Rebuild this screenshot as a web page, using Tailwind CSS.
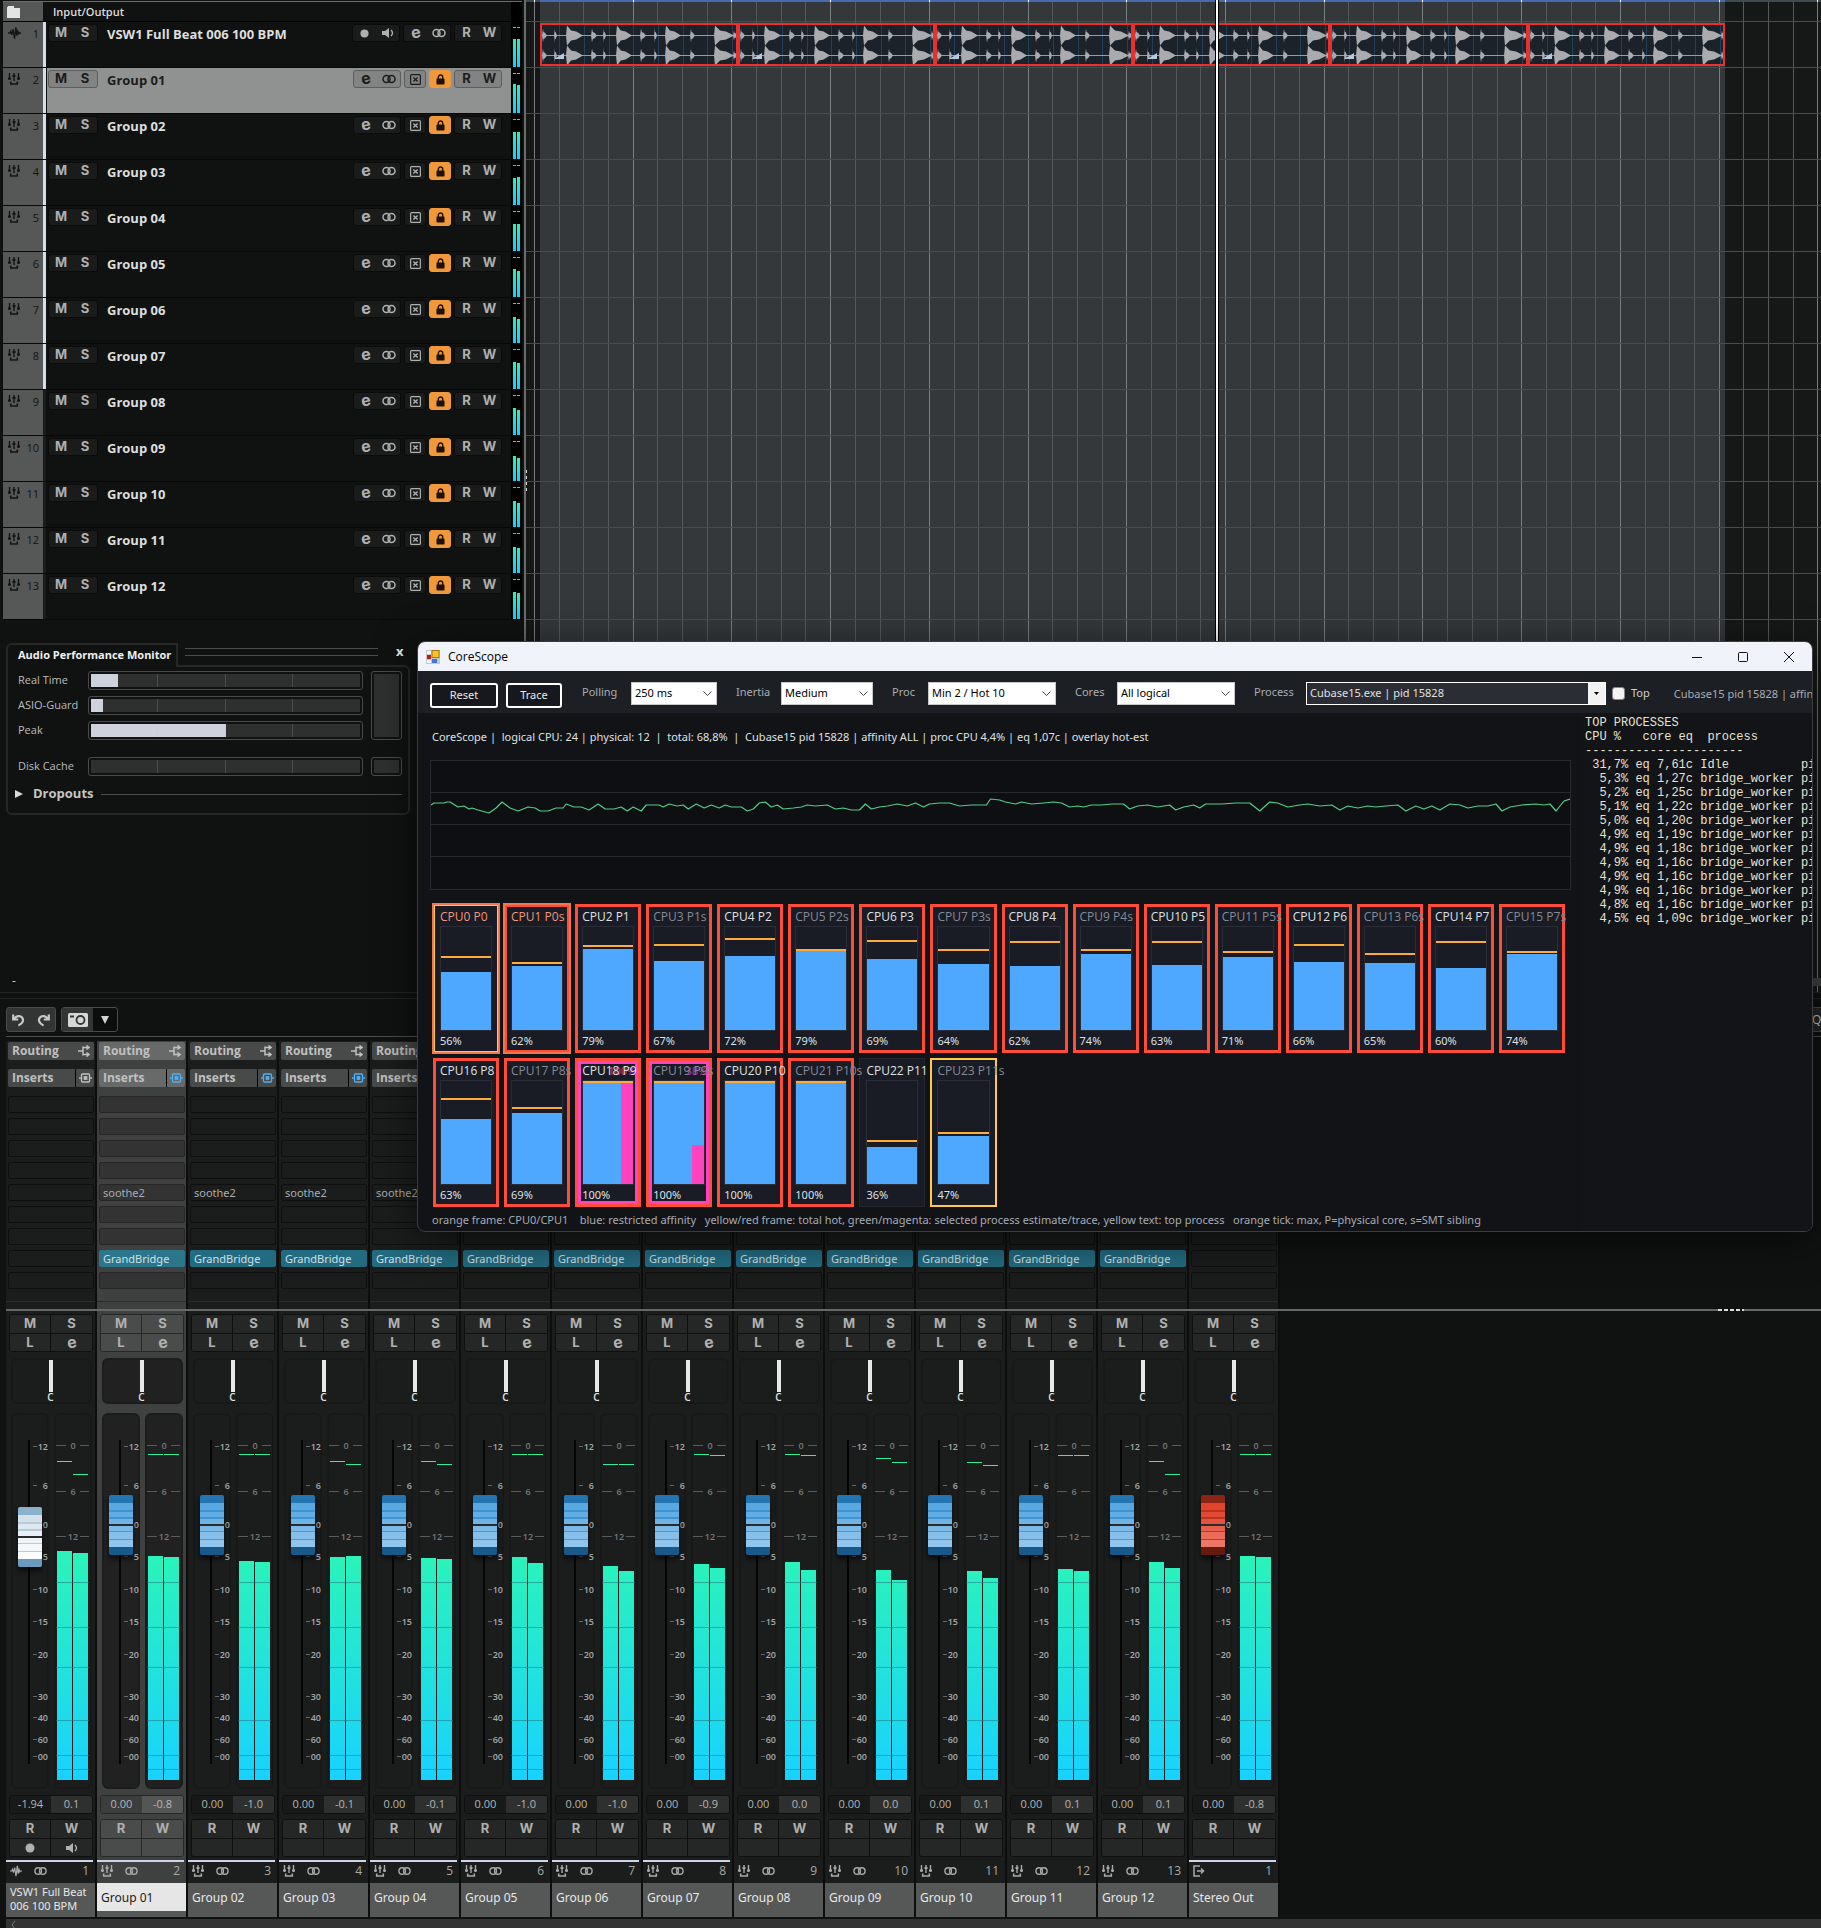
<!DOCTYPE html>
<html lang="en">
<head>
  <meta charset="UTF-8" />
  <meta name="viewport" content="width=device-width, initial-scale=1.0">
  <title>Cubase - CoreScope</title>
  <script src="https://cdn.jsdelivr.net/npm/@tailwindcss/browser@4"></script>
</head>
<body class="bg-[#101211] text-[#c8c8c8] font-['Open_Sans','Noto_Sans',sans-serif] text-xs">

  <!-- Shared icons -->
  <svg class="hidden">
    <symbol id="i-group" viewBox="0 0 12 12"><path d="M1.500 0v7M6 0v8M10.500 0v7" fill="none" stroke="currentColor" stroke-width="1.400" /><path d="M0 4.500h3v2H0zM4.500 2h3v2h-3zM9 4.500h3v2H9z" fill="currentColor" /><path d="M2.700 8.500V11h6.600V8.500" fill="none" stroke="currentColor" stroke-width="1.600" /></symbol>
    <symbol id="i-wave" viewBox="0 0 14 12"><path d="M0 6h2l1-2 1 4 1.500-6 1.500 10L8.500 0l1 9 1-5 1 3 .7-1H14" fill="none" stroke="currentColor" stroke-width="1.400" /></symbol>
    <symbol id="i-link" viewBox="0 0 14 10"><g fill="none" stroke="currentColor" stroke-width="1.500"><circle cx="4.500" cy="5" r="3.500" /><circle cx="9.500" cy="5" r="3.500" /></g></symbol>
    <symbol id="i-speaker" viewBox="0 0 12 10"><path d="M0 3h3l4-3v10L3 7H0z" fill="currentColor" /><path d="M9 2c2 2 2 4 0 6" fill="none" stroke="currentColor" stroke-width="1.300" /></symbol>
    <symbol id="i-rec" viewBox="0 0 10 10"><circle cx="5" cy="5" r="4.500" fill="currentColor" /></symbol>
    <symbol id="i-freeze" viewBox="0 0 12 12"><rect x=".7" y=".7" width="10.600" height="10.600" rx="1" fill="none" stroke="currentColor" stroke-width="1.300" /><path d="M3.700 3.700l4.600 4.600M8.300 3.700L3.700 8.300" stroke="currentColor" stroke-width="1.500" /></symbol>
    <symbol id="i-lock" viewBox="0 0 10 12"><rect x="0.500" y="5" width="9" height="6.500" rx="1" fill="currentColor" /><path d="M2.500 5.500V3.500a2.500 2.500 0 0 1 5 0v2" fill="none" stroke="currentColor" stroke-width="1.500" /></symbol>
    <symbol id="i-route" viewBox="0 0 12 12"><path d="M0 6h5M5 1.500v9M5 2.500h5M5 9.500h5M8.500 0.500l2.500 2-2.500 2M8.500 7.500l2.500 2-2.500 2" fill="none" stroke="currentColor" stroke-width="1.500" /></symbol>
    <symbol id="i-insert" viewBox="0 0 14 10"><rect x="2.700" y=".7" width="8.600" height="8.600" rx="1" fill="none" stroke="currentColor" stroke-width="1.400" /><path d="M0 5h2M12 5h2" stroke="currentColor" stroke-width="1.500" /><rect x="5" y="3" width="4" height="4" fill="currentColor" /></symbol>
    <symbol id="i-out" viewBox="0 0 12 12"><path d="M7 1H1v10h6M4 6h6M8 3.500L10.500 6 8 8.500" fill="none" stroke="currentColor" stroke-width="1.500" /></symbol>
  </svg>

  <main class="relative overflow-hidden">

    <!-- Project window -->
    <section class="flex h-[992px]">
      <div class="w-[524px] shrink-0 flex flex-col">
        <div class="ml-[3px] mr-[2px] mt-px border-t border-[#6b6c6b]">
          <div class="flex h-5 border-b border-black">
            <div class="w-10 bg-[#555857] flex items-center pl-1">
              <svg width="13" height="12" viewBox="0 0 13 12" fill="#e4e4e4"><path d="M0 1h1V0h6v2h6v10H0z" /></svg>
            </div>
            <h2 class="flex-1 pl-[10px] font-semibold text-[11px] leading-5 text-[#dcdcdc]">Input/Output</h2>
            <div class="w-[11px] bg-black"></div>
          </div>
          <div id="tracks"></div>
        </div>

        <!-- Audio Performance Monitor -->
        <div class="mt-[23px] ml-[6px] w-[404px]">
          <div class="flex h-[22px]">
            <h2 class="w-[172px] h-6 bg-[#101211] relative border-2 border-b-0 border-[#262827] rounded-tl-md pl-[10px] font-bold text-[11px] leading-[20px] text-[#f0f0f0] whitespace-nowrap">Audio Performance Monitor</h2>
            <div class="flex-1 mt-[5px] ml-[7px] mr-[18px] h-2 border-y border-[#4d4d4d]"></div>
            <button class="w-[14px] h-4 text-left font-bold text-[13px] leading-4 text-[#e8e8e8]" aria-label="Close">x</button>
          </div>
          <div class="h-[150px] border-2 border-[#262827] rounded-md rounded-tl-none pl-[10px] pr-[6px] pt-1">
            <div class="flex gap-2">
              <div id="perf" class="flex-1 flex flex-col gap-[6px]"></div>
              <div class="w-[31px] h-[69px] border border-[#4a4a4a] rounded-[3px] p-[2px]"><div class="h-full bg-[#2e302f]"></div></div>
            </div>
            <div class="flex gap-2 mt-[17px]">
              <div id="disk" class="flex-1"></div>
              <div class="w-[31px] h-[19px] border border-[#4a4a4a] rounded-[3px] p-[2px]"><div class="h-full bg-[#2e302f]"></div></div>
            </div>
            <button class="flex items-center w-full mt-2 h-5 font-bold text-[13px] text-[#c4c4c4]">
              <svg class="-ml-[3px] mr-[10px]" width="8" height="8" fill="#d8d8d8"><path d="M0 0l8 4-8 4z" /></svg>
              Dropouts <span class="flex-1 ml-[7px] h-px bg-[#4d4d4d]"></span>
            </button>
          </div>
        </div>
        <p class="mt-auto pl-3 leading-[22px]">-</p>
      </div>

      <!-- Arrange area -->
      <div id="arrange" class="flex-1 relative overflow-hidden border-l-2 border-[#6a6b6b] bg-[#161817]"></div>
    </section>

    <!-- MixConsole -->
    <section class="border-t border-[#222423]">
      <div class="mt-[5px] border-t border-[#222423]"></div>
      <div class="ml-[6px] mt-2 flex gap-[5px] h-[25px]">
        <div class="flex w-[50px] bg-[#333534] border border-[#4a4c4b] rounded-[3px] items-center justify-around text-[#c8c8c8]">
          <button aria-label="Undo"><svg width="14" height="14" viewBox="0 0 14 14" fill="none" stroke="currentColor" stroke-width="2.200"><path d="M1.200 1.500v5h5M2 6c2-3 6-4 8-1.500s1 6-3.500 8" /></svg></button>
          <button aria-label="Redo"><svg width="14" height="14" viewBox="0 0 14 14" fill="none" stroke="currentColor" stroke-width="2.200"><path d="M12.800 1.500v5h-5M12 6C10 3 6 2 4 4.500s-1 6 3.500 8" /></svg></button>
        </div>
        <div class="flex w-[57px] border border-[#4a4c4b] rounded-[3px] items-center bg-[#0c0d0d]">
          <button class="w-[31px] h-full bg-[#333534] grid place-items-center" aria-label="Snapshot"><svg width="20" height="14" viewBox="0 0 20 14"><rect width="20" height="14" rx="1.500" fill="#d6d6d6" /><rect x="2" y="2.500" width="4" height="2" fill="#333" /><circle cx="12.500" cy="7" r="4" fill="none" stroke="#333" stroke-width="1.800" /></svg></button>
          <button class="flex-1 grid place-items-center" aria-label="Snapshots menu"><svg width="8" height="8" fill="#d0d0d0"><path d="M0 0h8L4 8z" /></svg></button>
        </div>
      </div>
      <div class="ml-[6px] mt-1 h-px bg-[#4c4e4d]"></div>
      <div id="racks" class="ml-[6px] mt-1 flex h-[268px]"></div>
      <div class="ml-[6px] h-[2px] bg-[#666867] flex justify-end pr-[77px]"><div class="w-[26px] bg-[repeating-linear-gradient(90deg,#ddd_0_4px,#101211_4px_6px)]"></div></div>
      <div id="strips" class="ml-[6px] flex"></div>
      <div class="ml-[6px] mt-[2px] h-[9px] bg-[#333333] pl-1"><svg width="6" height="9" fill="none" stroke="#777"><path d="M5 2L2 6l3 4" /></svg></div>
    </section>

    <!-- Right edge scroller and zoom button, mostly behind the window -->
    <div class="absolute right-0 top-[978px] w-3 h-2 bg-[#424443]"></div>
    <div class="absolute right-0 top-[1007px] w-[9px] h-[25px] border-y border-[#4a4c4b] bg-[#262827] leading-[23px] overflow-hidden">Q-</div>

    <!-- CoreScope window -->
    <section class="absolute left-[417px] right-2 top-[641px] h-[591px] rounded-lg border border-[#3a3c40] bg-[#121317] overflow-hidden shadow-[0_8px_40px_rgba(0,0,0,0.6)] flex flex-col font-['Noto_Sans',sans-serif] text-[11px]">
      <header class="h-[29px] shrink-0 bg-[#f0f3f9] text-black flex items-center pl-2">
        <svg width="14" height="14" viewBox="0 0 14 14"><path d="M0 0h14v14H0z" fill="#c4c8ce" /><path d="M1 1h4v3H1zM1 10h4v3H1z" fill="#f6f6f6" /><rect x="6" y="0.500" width="7" height="7" fill="#f9c22e" stroke="#a97800" /><rect x="1" y="5" width="4" height="4" fill="#b02318" /><rect x="6" y="9" width="5" height="4" fill="#3c78d8" /></svg>
        <h1 class="flex-1 pl-2 font-['Open_Sans',sans-serif] text-xs">CoreScope</h1>
        <div class="flex gap-[34px] pr-[17px]">
          <button aria-label="Minimize"><svg width="12" height="12" stroke="#111"><path d="M1 6.500h10" /></svg></button>
          <button aria-label="Maximize"><svg width="12" height="12" fill="none" stroke="#111"><rect x="1.500" y="1.500" width="9" height="9" rx="1" /></svg></button>
          <button aria-label="Close window"><svg width="12" height="12" stroke="#111"><path d="M1 1l10 10M11 1L1 11" /></svg></button>
        </div>
      </header>

      <div class="h-[42px] shrink-0 bg-[#1c1f24] flex items-start pt-[11px] pl-3 text-[#a9adb3] whitespace-nowrap overflow-hidden">
        <button class="mt-px w-[68px] h-[25px] shrink-0 rounded-[3px] border-2 border-white bg-[#16181d] text-[#e8e8e8]">Reset</button>
        <button class="mt-px ml-2 w-14 h-[25px] shrink-0 rounded-[3px] border-2 border-white bg-[#16181d] text-[#e8e8e8]">Trace</button>
        <div id="combos" class="flex shrink-0 ml-px"></div>
        <label for="process" class="w-[52px] ml-[19px] shrink-0 leading-5">Process</label>
        <div class="relative w-[300px] shrink-0">
          <select id="process" class="appearance-none w-full h-[23px] border border-white bg-[#2a2d34] text-[#e0e0e0] pl-[3px]"><option>Cubase15.exe | pid 15828</option></select>
          <span class="absolute right-px top-px w-[17px] h-[21px] bg-[#f2f2f2] grid place-items-center pointer-events-none"><svg width="5" height="3"><path d="M0 0h5L2.500 3z" /></svg></span>
        </div>
        <input id="top" type="checkbox" class="appearance-none ml-[6px] mt-[5px] w-[13px] h-[13px] shrink-0 rounded-[3px] bg-[#f3f3f3] border border-[#888]">
        <label for="top" class="ml-[6px] leading-[22px] text-[#d0d0d0]">Top</label>
        <span class="ml-6 leading-6">Cubase15 pid 15828 | affinity ALL</span>
      </div>

      <div class="flex-1 flex min-h-0">
        <div class="flex-1 min-w-0 pl-3 text-[#dfe1e4]">
          <p class="pl-[2px] mt-[14px] leading-5 whitespace-pre">CoreScope |  logical CPU: 24 | physical: 12  |  total: 68,8%  |  Cubase15 pid 15828 | affinity ALL | proc CPU 4,4% | eq 1,07c | overlay hot-est</p>
          <svg class="mt-[13px] h-[130px] w-[calc(100%-11px)] bg-[#0e0f12] border border-[#26282f]" viewBox="0 0 1138 128" preserveAspectRatio="none" fill="none">
            <path d="M0 31.500h1138M0 63.500h1138M0 95.500h1138" stroke="#26282f" />
            <path id="load" stroke="#4fce86" stroke-width="1.200" stroke-linejoin="round" />
          </svg>
          <div id="cores" class="ml-[3px] mr-[17px] mt-[14px] grid grid-cols-16 gap-[5px]"></div>
          <p class="pl-[2px] mt-[3px] leading-5 whitespace-pre text-[#a6abb4]">orange frame: CPU0/CPU1    blue: restricted affinity   yellow/red frame: total hot, green/magenta: selected process estimate/trace, yellow text: top process   orange tick: max, P=physical core, s=SMT sibling</p>
        </div>
        <pre id="procs" class="w-[230px] shrink-0 pl-[3px] pt-[3px] bg-[#131418] overflow-hidden font-['Liberation_Mono',monospace] text-xs leading-[14px] text-[#e6e3cf]"></pre>
      </div>
    </section>
  </main>

  <script>
    const icon = (id, w, h) => `<svg width="${w}" height="${h}"><use href="#i-${id}" /></svg>`;
    const letterE = `<span class="font-['Inter',sans-serif] font-bold text-base leading-none -rotate-12 -mt-[3px]">e</span>`;

    // ---- Track list ----
    const trackMeters = [[28, 28], [29, 28], [27, 27], [27, 28], [27, 27], [28, 26], [26, 24], [27, 26], [27, 25], [25, 23], [26, 24], [26, 25], [27, 26]];

    function btnGroup(items, sel, cls) {
      const skin = sel ? 'border-[#5c5e5d] bg-[#828483] text-[#1c1c1c]' : 'border-[#0a0b0a] bg-[#1a1c1b] text-[#b0b0b0]';
      return `<div class="flex h-[18px] rounded-[3px] border ${cls || skin}">` +
        items.map(i => `<button class="flex-1 flex items-center justify-center">${i}</button>`).join('') + `</div>`;
    }

    document.getElementById('tracks').innerHTML = trackMeters.map((m, i) => {
      const sel = i === 1;
      const name = i === 0 ? 'VSW1 Full Beat 006 100 BPM' : 'Group ' + String(i).padStart(2, '0');
      const box = (items, w, cls) => `<div class="${w}">${btnGroup(items, sel, cls)}</div>`;
      const buttons = i === 0
        ? box([icon('rec', 9, 9), icon('speaker', 12, 10)], 'w-12') + box([letterE, icon('link', 14, 10)], 'w-12')
        : box([letterE, icon('link', 14, 10)], 'w-12') + box([icon('freeze', 11, 11)], 'w-[22px]') +
          box([icon('lock', 9, 11)], 'w-[22px]', 'border-[#f0983a] bg-[#f0983a] text-[#1c1206]');
      return `<div class="flex h-[46px] border-b border-[#070807]">
        <div class="w-10 bg-[#555857] text-[#141414] flex justify-between items-start pl-[5px] pr-1 pt-[5px]">
          ${icon(i ? 'group' : 'wave', i ? 12 : 13, 12)}<span class="text-[11px] leading-[14px]">${i + 1}</span>
        </div>
        <div class="w-[3px] mr-px ${i < 8 ? 'bg-[#d5dfeb]' : 'bg-[#1a1c1b]'}"></div>
        <div class="flex-1 flex pt-[2px] pl-px pr-[9px] ${sel ? 'bg-[#909291]' : ''}">
          <div class="w-[50px] font-['Inter',sans-serif] font-bold text-[13px]">${btnGroup(['M', 'S'], sel)}</div>
          <div class="flex-1 pl-[9px] font-bold text-[13px] leading-5 ${sel ? 'text-[#1c1c1c]' : 'text-[#dedede]'}">${name}</div>
          <div class="flex gap-[3px]">${buttons}<div class="w-12 font-['Inter',sans-serif] font-bold text-[13px]">${btnGroup(['R', 'W'], sel)}</div></div>
        </div>
        <div class="w-[11px] bg-black flex flex-col justify-between items-center pt-[5px]">
          <div class="flex gap-px"><i class="w-[3px] h-px bg-[#2ee69a]"></i><i class="w-[3px] h-px bg-[#2ee69a]"></i></div>
          <div class="flex gap-px items-end">
            ${m.map(h => `<i class="w-[3px] bg-linear-to-t from-[#18ccff] to-[#2bf0b8]" style="height:${h}px"></i>`).join('')}
          </div>
        </div>
      </div>`;
    }).join('');

    // ---- Performance bars ----
    const perfBar = (label, pct) => `<div class="flex items-center h-[19px]">
      <span class="w-[70px] text-[11px] text-[#bcbcbc]">${label}</span>
      <div class="flex-1 h-[19px] border border-[#4a4a4a] rounded-[3px] p-[2px]">
        <div class="h-full relative bg-[#2e302f]">
          <div class="h-full bg-[#cdd2dc]" style="width:${pct}%"></div>
          <div class="absolute inset-0 grid grid-cols-4 divide-x divide-[#b9c3bf]/20"><i></i><i></i><i></i><i></i></div>
        </div>
      </div></div>`;
    document.getElementById('perf').innerHTML = perfBar('Real Time', 10) + perfBar('ASIO-Guard', 4.5) + perfBar('Peak', 50);
    document.getElementById('disk').innerHTML = perfBar('Disk Cache', 0);

    // ---- Arrange grid and clips (x is relative to the area's left edge) ----
    const hits = [[0, 7, 5], [12, 8, 3], [24, 10, 17], [49, 7, 6], [61, 8, 3], [74, 10, 16], [98, 7, 6], [112, 8, 3], [123, 10, 16], [148, 7, 5], [172, 10, 20], [191, 5, 5]];
    function wave(cy) {
      return hits.map(([x, a, w]) =>
        `M${x} ${cy}L${x + 1} ${cy - a}L${x + w * 0.3} ${cy - a * 0.5}L${x + w * 0.6} ${cy - a * 0.4}L${x + w} ${cy}L${x + w * 0.6} ${cy + a * 0.4}L${x + w * 0.3} ${cy + a * 0.5}L${x + 1} ${cy + a}Z`).join('');
    }
    const clip = `<div class="border-2 border-[#e9302c] bg-[#1b2229] overflow-hidden">
      <svg width="198" height="39">
        ${[17, 42, 67, 91, 116, 141, 165, 190].map(x => `<path d="M${x}.500 0v39" stroke="#22405a" />`).join('')}
        <path d="M0 10.500h198M0 30.500h198" stroke="#9a9ca0" />
        <path d="${wave(10.5)}${wave(30.5)}" fill="#a9abaf" />
        <path d="M12 34l10-6v6z" fill="#b8c8dc" />
      </svg></div>`;
    let grid = '';
    for (let k = 0; k < 53; k++) {
      const x = Math.round(8 + k * 24.68) + 0.5;
      grid += `<path d="M${x} 2v990" stroke="${k % 4 ? '#565a5d' : '#7a7e82'}" />`;
      if (k % 4 === 0) grid += `<path d="M${x} 0v2" stroke="#fff" />`;
    }
    for (let k = 0; k < 14; k++) grid += `<path d="M0 ${21.5 + k * 46}h1300" stroke="#484c4e" />`;
    document.getElementById('arrange').innerHTML = `
      <div class="h-[2px] bg-[#3c4b4e]"><div class="h-full ml-[14px] w-[1185px] bg-[#4a6ab0]"></div></div>
      <div class="h-full ml-[14px] w-[1185px] bg-[#34383b]"></div>
      <svg class="absolute inset-0 w-full h-full">${grid}</svg>
      <div class="absolute left-[14px] top-[23px] w-[1185px] h-[43px] grid grid-cols-6">${clip.repeat(6)}</div>
      <div class="absolute left-[689px] top-0 w-1 h-full border-x border-black bg-white"></div>
      <div class="absolute left-0 top-[470px] w-px h-6 bg-[repeating-linear-gradient(#ddd_0_3px,#161817_3px_6px)]"></div>`;

    // ---- Mixer channels: fader dB, peak dB, bar tops, peak hold marks ----
    const channels = [
      ['-1.94', '0.1', 138, 140, 48, 61], ['0.00', '-0.8', 143, 144, 41, 41], ['0.00', '-1.0', 148, 149, 41, 41],
      ['0.00', '-0.1', 144, 143, 48, 51], ['0.00', '-0.1', 145, 146, 48, 51], ['0.00', '-1.0', 144, 150, 41, 41],
      ['0.00', '-1.0', 153, 158, 51, 51], ['0.00', '-0.9', 151, 155, 41, 42], ['0.00', '0.0', 149, 157, 41, 42],
      ['0.00', '0.0', 157, 167, 45, 49], ['0.00', '0.1', 158, 165, 49, 52], ['0.00', '0.1', 156, 158, 42, 42],
      ['0.00', '0.1', 149, 155, 48, 61], ['0.00', '-0.8', 143, 144, 41, 41]
    ];
    const lastCh = channels.length - 1;
    const chName = i => i === 0 ? 'VSW1 Full Beat 006 100 BPM' : i === lastCh ? 'Stereo Out' : 'Group ' + String(i).padStart(2, '0');

    document.getElementById('racks').innerHTML = channels.map((c, i) => {
      const sel = i === 1, grp = i > 0 && i < lastCh;
      let slots = '';
      for (let s = 0; s < 9; s++) {
        const txt = grp && s === 4 ? 'soothe2' : grp && s === 7 ? 'GrandBridge' : '';
        const skin = grp && s === 7 ? (sel ? 'bg-[#2b768b] border-[#2b768b] text-[#cfe0e6]' : 'bg-[#236b80] border-[#236b80] text-[#cfe0e6]')
          : sel ? 'bg-[#333333] border-[#262626] text-[#a8acae]' : 'bg-[#1b1d1c] border-[#0e0f0e] text-[#a8acae]';
        slots += `<div class="h-[17px] rounded-[2px] border ${skin} pl-[3px] font-['Noto_Sans',sans-serif] text-[11px] leading-[15px]">${txt}</div>`;
      }
      const head = sel ? 'bg-[#686a69]' : 'bg-[#484a49]';
      return `<div class="w-[91px] shrink-0 border-r-2 border-[#0c0d0c] ${sel ? 'bg-[#3f4140]' : 'bg-[#1b1d1c]'}">
        <div class="pl-[2px] pr-px pt-px font-bold text-[#c0c0c0]">
          <button class="flex w-full h-[18px] items-center justify-between rounded-[2px] px-1 ${head}">Routing${icon('route', 12, 12)}</button>
          <button class="mt-[9px] flex w-full h-[18px] items-center rounded-[2px] pl-1 ${head}"><span class="flex-1 text-left">Inserts</span><span class="h-full w-[19px] border-l border-black grid place-items-center ${grp ? 'text-[#4fb0f5]' : ''}">${icon('insert', 13, 10)}</span></button>
        </div>
        <div class="pl-[2px] pr-px mt-[9px] flex flex-col gap-[5px]">${slots}</div>
        <div class="mt-3 h-px ${sel ? 'bg-[#2c2e2d]' : 'bg-[#2a2c2b]'}"></div>
      </div>`;
    }).join('');

    const faderMarks = [['12', 33], ['6', 72], ['0', 111], ['5', 143], ['10', 176], ['15', 208], ['20', 241], ['30', 283], ['40', 304], ['60', 326], ['00', 343]];
    const blueCap = '[&::-webkit-slider-thumb]:bg-[linear-gradient(#2275b0_0_8px,#5aa8e0_8px_15px,#3d93d4_15px_17px,#62ade3_17px_22px,#3d93d4_22px_24px,#70b4e6_24px_29px,#2a2a2a_29px_31px,#7cbaea_31px_36px,#459ad8_36px_37px,#86c0ea_37px_44px,#459ad8_44px_45px,#90c6ee_45px_52px,#17598a_52px)]';
    const whiteCap = '[&::-webkit-slider-thumb]:bg-[linear-gradient(#8ab2cc_0_8px,#d5e1ea_8px_15px,#b5cbda_15px_17px,#dfe8ef_17px_22px,#b5cbda_22px_24px,#e9eff4_24px_29px,#2a2a2a_29px_31px,#eff4f8_31px_36px,#b5cbda_36px_37px,#f4f8fa_37px_44px,#b5cbda_44px_45px,#fbfdff_45px_52px,#6a9abd_52px)]';
    const redCap = '[&::-webkit-slider-thumb]:bg-[linear-gradient(#8a2415_0_8px,#e2452c_8px_15px,#b8351f_15px_17px,#e04a33_17px_22px,#b8351f_22px_24px,#e2543f_24px_29px,#2a2a2a_29px_31px,#e65f4b_31px_36px,#b93a28_36px_37px,#e96b58_37px_44px,#b93a28_44px_45px,#ec7767_45px_52px,#651a10_52px)]';

    document.getElementById('strips').innerHTML = channels.map((c, i) => {
      const sel = i === 1;
      const line = sel ? 'border-[#262827] divide-[#262827]' : 'border-[#0e0f0e] divide-[#0e0f0e]';
      const cell = sel ? 'bg-[#4a4c4b]' : 'bg-[#252726]';
      const well = sel ? 'bg-[#222122] border-[#1c1c1c]' : 'bg-[#1b1d1c] border-[#171918]';
      const cap = i === 0 ? whiteCap : i === lastCh ? redCap : blueCap;
      const rowOf = items => `<div class="grid grid-cols-2 divide-x ${line}">` + items.map(t => `<button class="h-[18px] flex items-center justify-center ${cell}">${t}</button>`).join('') + `</div>`;
      const marks = faderMarks.map(([t, y]) => `<path d="M22 ${y}.500h4" stroke="#666" /><text x="37" y="${y + 4}" text-anchor="end">${t}</text>`).join('');
      const meterMarks = [['0', 32], ['6', 78], ['12', 123]].map(([t, y]) => `<path d="M1 ${y}.500h10M25 ${y}.500h9" stroke="#5a5c5b" /><text x="18" y="${y + 4}" text-anchor="middle">${t}</text>`).join('');
      return `<div class="w-[91px] shrink-0 border-r-2 border-[#0c0d0c] ${sel ? 'bg-[#3f4140]' : 'bg-[#1b1d1c]'}">
        <div class="mt-[3px] ml-[3px] mr-[2px] h-[38px] rounded-[3px] border divide-y overflow-hidden ${line} font-['Inter',sans-serif] font-bold text-[13px] text-[#b0b0b0]">
          ${rowOf(['M', 'S'])}${rowOf(['L', letterE])}
        </div>
        <div class="mt-[6px] ml-[5px] mr-[3px] pr-[2px] h-[46px] rounded-md border-2 ${well} flex flex-col items-center">
          <div class="w-1 h-8 bg-[#e8e8ea]"></div><span class="font-semibold text-[10px] leading-[10px] text-[#dfe1e4]">C</span>
        </div>
        <div class="mt-[9px] ml-[5px] mr-[3px] flex justify-between h-[376px]">
          <div class="relative w-[38px] rounded-md border-2 ${well}">
            <svg class="absolute -left-[2px] -top-[2px]" width="38" height="376">
              <path d="M18 27v324" stroke="#050505" stroke-width="2" />
              <g fill="#a3a9ad" class="font-semibold text-[9px]">${marks}</g>
            </svg>
            <input type="range" aria-label="${chName(i)} level" min="0" max="1000" value="${i ? 753 : 714}"
              class="absolute left-[5px] top-[5px] w-6 h-[364px] appearance-none bg-transparent [writing-mode:vertical-lr] [direction:rtl] [&::-webkit-slider-thumb]:appearance-none [&::-webkit-slider-thumb]:w-6 [&::-webkit-slider-thumb]:h-[60px] [&::-webkit-slider-thumb]:rounded-[2px] [&::-webkit-slider-thumb]:shadow-[0_4px_5px_rgba(0,0,0,0.6)] ${cap}">
          </div>
          <div class="w-[38px] rounded-md border-2 ${well}">
            <svg class="-mt-[2px] -ml-px" width="37" height="374">
              <defs><linearGradient id="m${i}" gradientUnits="userSpaceOnUse" x1="0" x2="0" y1="137" y2="367"><stop offset="0" stop-color="#2bf4b8" /><stop offset="1" stop-color="#18d2ff" /></linearGradient></defs>
              <g fill="#76797b" class="font-semibold text-[9px]">${meterMarks}</g>
              <rect x="2" y="${c[2]}" width="15" height="${367 - c[2]}" fill="url(#m${i})" /><rect x="18" y="${c[3]}" width="15" height="${367 - c[3]}" fill="url(#m${i})" />
              <path d="M2 ${c[4]}.500h15M18 ${c[5]}.500h15" stroke="#2df09a" />
              <path d="M1 169.500h33M1 214.500h33M1 254.500h33M1 307.500h33M1 342.500h33M1 356.500h33" stroke="#1f7f86" stroke-opacity=".6" />
            </svg>
          </div>
        </div>
        <div class="mt-[6px] ml-[3px] mr-[2px] h-[19px] rounded-[3px] border overflow-hidden ${line} grid grid-cols-2 text-center text-[11px] leading-4 text-[#b4b6b5]">
          <span class="${sel ? 'bg-[#3c3e3d]' : 'bg-[#181a19]'}">${c[0]}</span><span class="${sel ? 'bg-[#545655]' : 'bg-[#2e302f]'}">${c[1]}</span>
        </div>
        <div class="mt-[5px] ml-[3px] mr-[2px] h-[38px] rounded-[3px] border divide-y overflow-hidden ${line} font-['Inter',sans-serif] font-bold text-[13px] text-[#b0b0b0]">
          ${rowOf(['R', 'W'])}${rowOf(i ? ['', ''] : [icon('rec', 10, 10), icon('speaker', 12, 10)])}
        </div>
        <div class="mt-[3px] mr-[2px] h-[2px] ${i < 8 || i === lastCh ? 'bg-[#ccd6e6]' : ''}"></div>
        <div class="h-[21px] flex items-center pl-1 pr-[6px] pb-[3px] gap-3 text-[#a8aaa9]">
          ${icon(i === 0 ? 'wave' : i === lastCh ? 'out' : 'group', 12, 12)}${i < lastCh ? icon('link', 13, 10) : ''}
          <span class="flex-1 text-right text-xs">${i === lastCh ? 1 : i + 1}</span>
        </div>
        <div class="h-[34px] bg-[#555857] font-['Noto_Sans',sans-serif]">
          <div class="h-7 flex items-center pl-1 ${i ? 'text-xs pt-[2px]' : 'text-[11px] leading-[14px] pt-1'} ${sel ? 'bg-[#e6e6e6] text-[#1c1c1c]' : 'text-[#e8e8e8]'}">${chName(i)}</div>
        </div>
      </div>`;
    }).join('');

    // ---- CoreScope toolbar ----
    const combos = [['Polling', '250 ms', 49, 86], ['Inertia', 'Medium', 45, 92], ['Proc', 'Min 2 / Hot 10', 36, 128], ['Cores', 'All logical', 42, 118]];
    document.getElementById('combos').innerHTML = combos.map(([l, v, lw, w]) => `
      <label for="c${l}" class="ml-[19px] leading-5" style="width:${lw}px">${l}</label>
      <div class="relative" style="width:${w}px">
        <select id="c${l}" class="appearance-none w-full h-[23px] bg-white border border-[#c8c8c8] text-black pl-[3px]"><option>${v}</option></select>
        <svg class="absolute right-[5px] top-[9px] pointer-events-none" width="9" height="6" fill="none" stroke="#444"><path d="M.5 .5l4 4 4-4" /></svg>
      </div>`).join('');

    // ---- Load history ----
    const load = [0,44,3,42,13,42,16,41,19,41,27,46,33,45,38,48,41,47,47,49,58,52,65,47,71,41,79,47,87,50,97,46,104,47,109,50,117,50,125,47,132,47,135,43,143,46,150,46,158,49,167,43,174,48,183,48,190,46,196,50,202,46,210,50,215,44,228,44,232,46,238,43,246,45,252,44,257,48,265,43,273,47,280,44,288,47,294,44,300,46,310,46,316,50,322,48,328,42,334,41,340,46,346,44,352,48,362,47,370,46,376,44,384,45,396,44,404,48,412,47,420,49,428,49,434,43,440,48,448,46,456,45,466,43,476,45,484,42,492,46,498,43,508,42,518,42,528,45,540,44,555,44,559,38,568,39,574,41,584,43,590,41,600,43,612,42,622,41,630,42,638,46,646,45,652,46,660,44,670,44,680,43,692,43,698,48,706,45,716,44,726,46,738,44,744,49,752,46,762,44,768,47,774,43,790,43,804,42,818,42,828,50,838,41,846,42,856,46,868,44,876,43,888,45,900,44,908,49,916,45,926,47,936,45,944,46,954,45,966,44,974,50,984,45,992,48,1000,45,1008,49,1018,43,1028,44,1036,47,1046,45,1056,45,1064,43,1070,50,1078,46,1090,44,1104,43,1112,44,1118,43,1124,50,1132,40,1138,38];
    let d = '';
    for (let k = 0; k < load.length; k += 2) d += (k ? 'L' : 'M') + load[k] + ' ' + load[k + 1];
    document.getElementById('load').setAttribute('d', d);

    // ---- Cores: percent, max tick offset ----
    const cores = [[56, 30], [62, 36], [79, 19], [67, 18], [72, 12], [79, 23], [69, 14], [64, 23], [62, 15], [74, 23], [63, 15], [71, 25], [66, 18], [65, 27], [60, 15], [74, 25],
      [63, 18], [69, 27], [100, 1], [100, 1], [100, 1], [100, 1], [36, 60], [47, 52]];
    const trace = { 18: 100, 19: 38 };
    document.getElementById('cores').innerHTML = cores.map(([pct, tick], n) => {
      let frame = 'outline-3 -outline-offset-3 outline-[#ff4d3a]';
      if (n === 0) frame = 'outline-2 -outline-offset-1 outline-[#f0774f] inset-ring-2 inset-ring-[#ffc94a]';
      if (n === 1) frame = 'outline-2 -outline-offset-1 outline-[#f0774f] inset-ring-3 inset-ring-[#ff4d3a]';
      if (n === 18 || n === 19) frame = 'outline-3 -outline-offset-3 outline-[#ff4d3a] inset-ring-6 inset-ring-[#ff42bd]';
      if (n === 22) frame = 'outline-1 -outline-offset-1 outline-[#26282f]';
      if (n === 23) frame = 'outline-2 -outline-offset-2 outline-[#ffc94a]';
      const color = n < 2 ? 'text-[#f2977a]' : n % 2 ? 'text-[#858b96]' : 'text-[#dfe1e4]';
      return `<div class="relative h-[149px] bg-[#191c24] px-[7px] pt-1 ${frame}">
        ${trace[n] ? `<span class="absolute right-[5px] top-1 leading-[18px] text-[#c0359a]">${trace[n]}%</span>` : ''}
        <div class="relative z-10 font-['Open_Sans',sans-serif] text-xs leading-[18px] whitespace-nowrap ${color}">CPU${n} P${n >> 1}${n % 2 ? 's' : ''}</div>
        <div class="relative h-[105px] border border-[#2a2d36] flex items-end">
          <div class="w-full bg-[#4fa8ff]" style="height:${pct}%"></div>
          ${trace[n] ? `<div class="absolute right-0 bottom-0 w-3 bg-[#ff42bd]" style="height:${trace[n]}%"></div>` : ''}
          <div class="absolute left-0 right-0 h-[2px] bg-[#ffaa3c]" style="top:${tick - 1}px"></div>
        </div>
        <div class="leading-[19px]">${pct}%</div>
      </div>`;
    }).join('');

    // ---- Process list ----
    const procs = [['31,7', '7,61', 'Idle'], ['5,3', '1,27'], ['5,2', '1,25'], ['5,1', '1,22'], ['5,0', '1,20'], ['4,9', '1,19'], ['4,9', '1,18'], ['4,9', '1,16'], ['4,9', '1,16'], ['4,9', '1,16'], ['4,8', '1,16'], ['4,5', '1,09']];
    document.getElementById('procs').textContent = 'TOP PROCESSES\nCPU %   core eq  process\n----------------------\n' +
      procs.map(([p, e, n]) => `${p.padStart(5)}% eq ${e}c ${(n || 'bridge_worker').padEnd(13)} pid`).join('\n');
  </script>
</body>
</html>
